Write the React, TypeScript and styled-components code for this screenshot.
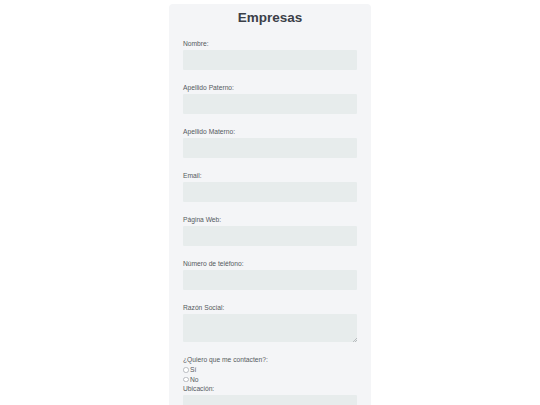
import React, { useState } from 'react';
import styled, { createGlobalStyle } from 'styled-components';

const GlobalStyle = createGlobalStyle`
    body {
        margin: 0;
        background-color: #ffffff;
        font-family: "Liberation Sans", Arial, sans-serif;
    }
`

const Page = styled.div`
    display: flex;
    justify-content: center;
    padding-top: 4px;
`

const FormCard = styled.form`
    display: flex;
    flex-direction: column;
    width: 202px;
    box-sizing: border-box;
    padding: 5px 14px 0 14px;
    background-color: #f4f5f7;
    border-radius: 4px;
    min-height: 401px;
`

const Title = styled.h2`
    margin: 0 0 13.5px 0;
    text-align: center;
    font-size: 13.5px;
    line-height: 17px;
    font-weight: bold;
    color: #3b4048;
`

const Field = styled.div`
    display: flex;
    flex-direction: column;
    margin-bottom: 13.5px;
`

const FieldLabel = styled.label<{ $gap?: number }>`
    display: block;
    font-size: 6.7px;
    line-height: 8px;
    color: #555a60;
    margin-bottom: ${p => (p.$gap ?? 2.5)}px;
`

const TextInput = styled.input`
    box-sizing: border-box;
    width: 100%;
    height: 20px;
    border: none;
    border-radius: 1px;
    background-color: #e7ecec;
    outline: none;
    padding: 0 4px;
`

const TextArea = styled.textarea`
    box-sizing: border-box;
    width: 100%;
    height: 28px;
    border: none;
    border-radius: 1px;
    background-color: #e7ecec;
    outline: none;
    padding: 2px 4px;
    display: block;
    resize: vertical;

    &::-webkit-resizer {
        background: linear-gradient(135deg, transparent 84%, #b9bcbf 84%, #b9bcbf 87%, transparent 87%, transparent 92%, #b9bcbf 92%, #b9bcbf 95%, transparent 95%);
    }
`

const RadioGroup = styled.div`
    display: flex;
    flex-direction: column;
    margin-top: -0.5px;
    margin-bottom: 0.5px;
`

const RadioRow = styled.label`
    display: flex;
    align-items: center;
    height: 9.5px;
    font-size: 6.7px;
    color: #555a60;
`

const Radio = styled.input`
    appearance: none;
    width: 5.5px;
    height: 5.5px;
    margin: 0 1.5px 0 0;
    border: 0.5px solid #b8bbc0;
    border-radius: 50%;
    background-color: #ffffff;
    box-sizing: border-box;
`

const fields = [
    'Nombre:',
    'Apellido Paterno:',
    'Apellido Materno:',
    'Email:',
    'Página Web:',
    'Número de teléfono:',
];

function App() {
    const [contact, setContact] = useState<string>('');

    return (
        <Page>
            <GlobalStyle />
            <FormCard>
                <Title>Empresas</Title>

                {fields.map((name, index) => (
                    <Field key={index}>
                        <FieldLabel>{name}</FieldLabel>
                        <TextInput type="text" />
                    </Field>
                ))}

                <Field>
                    <FieldLabel>Razón Social:</FieldLabel>
                    <TextArea />
                </Field>

                <Field>
                    <FieldLabel $gap={2}>¿Quiero que me contacten?:</FieldLabel>
                    <RadioGroup>
                        <RadioRow>
                            <Radio type="radio" name="contacto" checked={contact === 'si'} onChange={() => setContact('si')} />
                            Sí
                        </RadioRow>
                        <RadioRow>
                            <Radio type="radio" name="contacto" checked={contact === 'no'} onChange={() => setContact('no')} />
                            No
                        </RadioRow>
                    </RadioGroup>
                    <FieldLabel>Ubicación:</FieldLabel>
                    <TextInput type="text" />
                </Field>
            </FormCard>
        </Page>
    );
}

export default App;
